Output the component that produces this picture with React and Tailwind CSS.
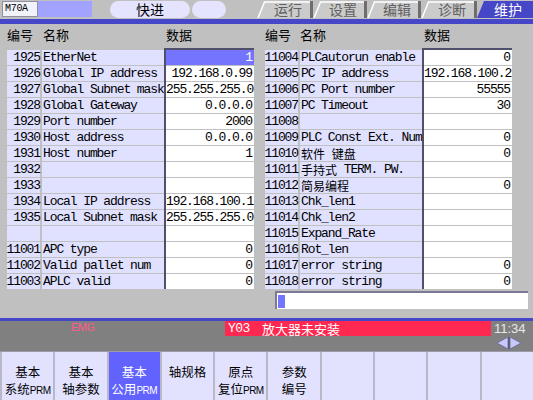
import React from "react";

const MONO = { fontFamily: '"Liberation Mono","Noto Sans CJK SC",monospace' };
const CJK = { fontFamily: '"Noto Sans CJK SC","Liberation Sans",sans-serif' };

const left = [
  ["1925", "EtherNet", "1"],
  ["1926", "Global IP address", "192.168.0.99"],
  ["1927", "Global Subnet mask", "255.255.255.0"],
  ["1928", "Global Gateway", "0.0.0.0"],
  ["1929", "Port number", "2000"],
  ["1930", "Host address", "0.0.0.0"],
  ["1931", "Host number", "1"],
  ["1932", "", ""],
  ["1933", "", ""],
  ["1934", "Local IP address", "192.168.100.1"],
  ["1935", "Local Subnet mask", "255.255.255.0"],
  ["", "", ""],
  ["11001", "APC type", "0"],
  ["11002", "Valid pallet num", "0"],
  ["11003", "APLC valid", "0"],
];

const right = [
  ["11004", "PLCautorun enable", "0"],
  ["11005", "PC IP address", "192.168.100.2"],
  ["11006", "PC Port number", "55555"],
  ["11007", "PC Timeout", "30"],
  ["11008", "", ""],
  ["11009", "PLC Const Ext. Num", "0"],
  ["11010", "软件 键盘", "0"],
  ["11011", "手持式 TERM. PW.", ""],
  ["11012", "简易编程", "0"],
  ["11013", "Chk_len1", ""],
  ["11014", "Chk_len2", ""],
  ["11015", "Expand_Rate", ""],
  ["11016", "Rot_len", ""],
  ["11017", "error string", "0"],
  ["11018", "error string", "0"],
];

function NameText({ text }) {
  const parts = text.split(/([\u4e00-\u9fff]+)/).filter((p) => p !== "");
  return (
    <>
      {parts.map((p, i) =>
        /[\u4e00-\u9fff]/.test(p) ? (
          <span key={i} className="text-[12px] leading-[15px] tracking-[0px]" style={CJK}>
            {p}
          </span>
        ) : (
          <span key={i}>{p}</span>
        )
      )}
    </>
  );
}

function Table({ rows, selectFirst }) {
  return (
    <div className="flex text-[13px] leading-[15px] tracking-[-1.1px] text-black" style={MONO}>
      <div className="flex flex-col gap-px pt-[2px] w-[33px]">
        {rows.map((r, i) => (
          <div key={i} className="h-[15px] bg-[#e0e0ff] flex justify-end whitespace-nowrap">
            {r[0]}
          </div>
        ))}
      </div>
      <div className="flex flex-col gap-px pt-[2px] w-[122px] ml-[2px]">
        {rows.map((r, i) => (
          <div key={i} className="h-[15px] bg-[#e0e0ff] pl-[1px] whitespace-pre flex items-center">
            <NameText text={r[1]} />
          </div>
        ))}
      </div>
      <div className="flex flex-col gap-px w-[90px] border-l-2 border-t-2 border-[#50506c]">
        {rows.map((r, i) => (
          <div
            key={i}
            className={
              "h-[15px] text-right pr-[2px] whitespace-pre overflow-hidden " +
              (selectFirst && i === 0 ? "bg-[#7474ff] text-white" : "bg-white")
            }
          >
            {r[2]}
          </div>
        ))}
      </div>
    </div>
  );
}

function Tab({ label, active, w }) {
  return (
    <div className="relative h-[17px]" style={{ width: w }}>
      <svg className="absolute inset-0" width={w} height="17" viewBox={`0 0 ${w} 17`}>
        {active ? (
          <polygon points={`0,17 7,0 ${w},0 ${w},17`} fill="#4646c8" />
        ) : (
          <>
            <polygon points={`0,17 7,0 ${w},0 ${w},17`} fill="#cbcbcb" />
            <polyline points={`1,17 7.5,1 ${w - 3},1`} fill="none" stroke="#ffffff" strokeWidth="1.5" />
            <rect x={w - 3} y="0" width="3" height="17" fill="#6e6e6e" />
          </>
        )}
      </svg>
      <div
        className={
          "relative text-[14px] leading-[17px] text-center pl-[6px] " +
          (active ? "text-white" : "text-[#606060]")
        }
        style={CJK}
      >
        {label}
      </div>
    </div>
  );
}

const PRM = () => (
  <span
    className="text-[10px] leading-[14px] tracking-[-0.5px]"
    style={{ fontFamily: '"Liberation Sans",sans-serif' }}
  >
    PRM
  </span>
);

function Btn({ l1, l2, prm2, active }) {
  return (
    <div
      className={
        "flex flex-col items-center pt-[11px] border-l-2 border-[#b8b8c8] text-[12.5px] leading-[18px] " +
        (active ? "bg-[#6262ff] text-white" : "bg-[#e2e2ff] text-black")
      }
      style={CJK}
    >
      <div className="h-[17px] whitespace-nowrap flex items-center">{l1}</div>
      <div className="h-[18px] whitespace-nowrap flex items-end">
        {l2 && <span>{l2}</span>}
        {prm2 && <PRM />}
      </div>
    </div>
  );
}

export default function App() {
  return (
    <div className="w-[533px] h-[400px] bg-[#c0c0c0] flex flex-col overflow-hidden">
      {/* top bar */}
      <div className="h-[19px] flex items-start pt-[1px]">
        <div
          className="ml-[2px] w-[36px] h-[16px] bg-[#f2f2fa] border border-[#9090a0] text-[10px] leading-[14px] pl-[2px] tracking-[-0.3px]"
          style={MONO}
        >
          M70A
        </div>
        <div className="w-[54px] h-[16px] bg-[#a2a2ff]" />
        <div
          className="ml-[18px] w-[80px] h-[17px] rounded-full bg-[#e4e4ff] text-[14px] leading-[17px] text-center text-black"
          style={CJK}
        >
          快进
        </div>
        <div className="ml-[2px] w-[34px] h-[17px] rounded-full bg-[#e4e4ff]" />
        <div className="ml-[31px] flex">
          <Tab label="运行" w={56} />
          <Tab label="设置" w={54} />
          <Tab label="编辑" w={54} />
          <Tab label="诊断" w={56} />
          <Tab label="维护" w={56} active />
        </div>
      </div>
      <div className="h-[5px] bg-[#4646c8]" />

      {/* main */}
      <div className="h-[294px] flex flex-col">
        <div className="h-[24px] flex text-[13px] leading-[16px] pt-[3px] text-black" style={CJK}>
          <div className="ml-[7px] w-[36px]">编号</div>
          <div className="w-[123px]">名称</div>
          <div className="w-[99px]">数据</div>
          <div className="w-[35px]">编号</div>
          <div className="w-[124px]">名称</div>
          <div>数据</div>
        </div>
        <div className="flex">
          <div className="ml-[7px]">
            <Table rows={left} selectFirst />
          </div>
          <div className="ml-[11px]">
            <Table rows={right} />
          </div>
        </div>
        <div className="mt-[2px] ml-[275px] w-[253px] h-[18px] bg-white border-t-2 border-l-2 border-[#7a7a96] flex items-center pl-[1px]">
          <div className="w-[7px] h-[13px] bg-[#7474ff]" />
        </div>
      </div>

      <div className="h-[3px] bg-[#4646c8]" />

      {/* status */}
      <div className="h-[30px] bg-[#808080] flex flex-col">
        <div className="h-[15px] flex">
          <div
            className="w-[225px] pl-[71px] text-[11px] leading-[13px] text-[#ff5a8a] tracking-[-0.5px]"
            style={{ fontFamily: '"Liberation Sans",sans-serif' }}
          >
            EMG
          </div>
          <div className="w-[266px] bg-[#ff2850] text-white text-[13px] leading-[15px] pl-[3px] flex">
            <span className="w-[34px] tracking-[-0.5px]" style={MONO}>
              Y03
            </span>
            <span style={CJK}>放大器未安装</span>
          </div>
          <div
            className="flex-1 text-[13px] leading-[15px] text-[#e8e8e8] pl-[3px]"
            style={{ fontFamily: '"Liberation Sans",sans-serif' }}
          >
            11:34
          </div>
        </div>
        <div className="flex justify-end pr-[11px] pt-[1px]">
          <svg width="26" height="12" viewBox="0 0 26 12">
            <polygon points="12,0 12,12 1,6" fill="#c8c8ff" stroke="#6a6a90" strokeWidth="0.8" />
            <rect x="12.5" y="0" width="1" height="12" fill="#404050" />
            <polygon points="14,0 14,12 25,6" fill="#c8c8ff" stroke="#6a6a90" strokeWidth="0.8" />
          </svg>
        </div>
      </div>

      {/* buttons */}
      <div className="flex-1 grid grid-cols-10 border-t border-[#9a9aa8]">
        <Btn l1="基本" l2="系统" prm2 />
        <Btn l1="基本" l2="轴参数" />
        <Btn l1="基本" l2="公用" prm2 active />
        <Btn l1="轴规格" />
        <Btn l1="原点" l2="复位" prm2 />
        <Btn l1="参数" l2="编号" />
        <Btn />
        <Btn />
        <Btn />
        <Btn />
      </div>
    </div>
  );
}
